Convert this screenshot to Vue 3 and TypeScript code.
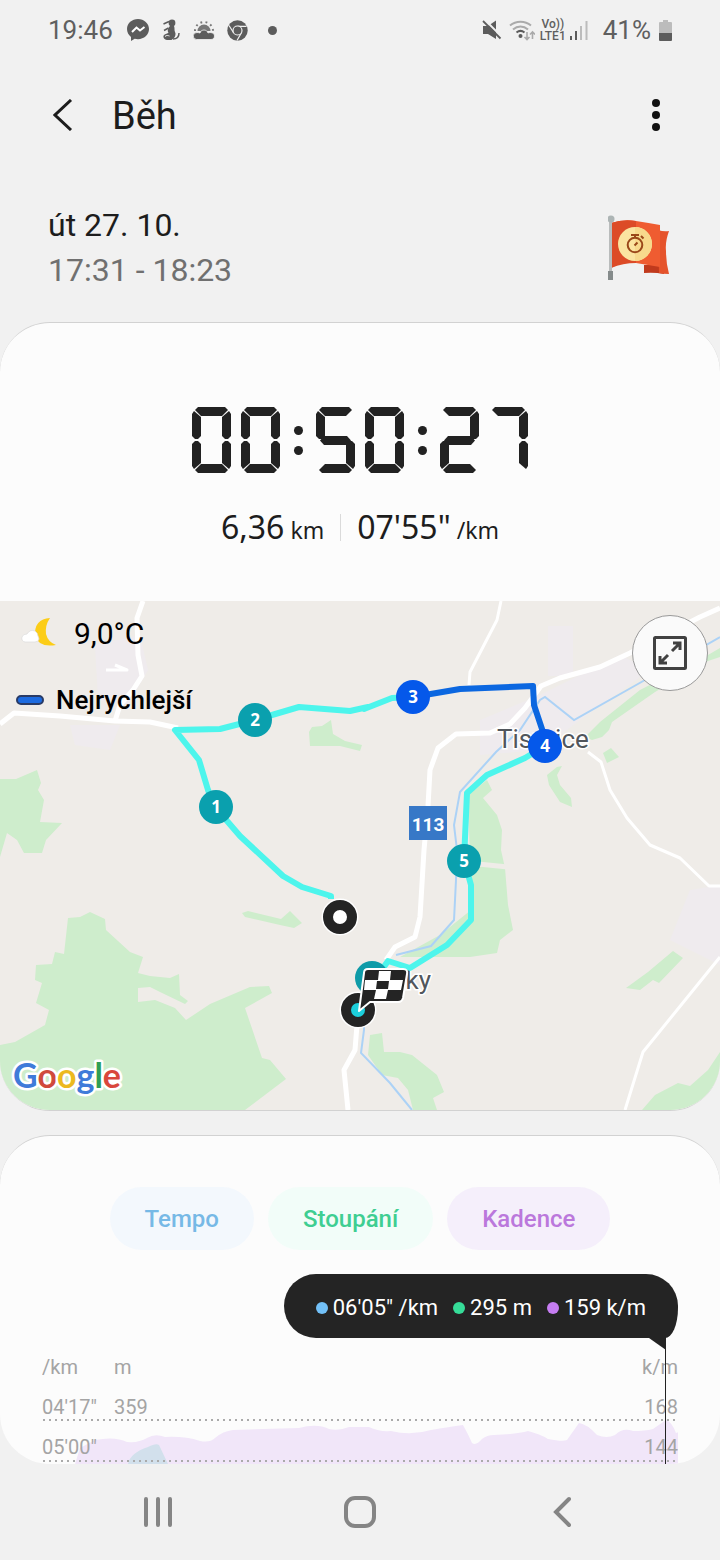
<script setup lang="ts">
interface Series {
  label: string
  tone: 'pace' | 'climb' | 'cadence'
  value: string
}

interface Marker {
  label: string
  x: number
  y: number
  fast: boolean
}

const duration = '00:50:27'

const segmentsByDigit: Record<string, string> = {
  '0': 'abcdef',
  '1': 'bc',
  '2': 'abged',
  '3': 'abgcd',
  '4': 'fgbc',
  '5': 'afgcd',
  '6': 'afgedc',
  '7': 'abc',
  '8': 'abcdefg',
  '9': 'abcdfg',
}

const series: Series[] = [
  { label: 'Tempo', tone: 'pace', value: '06\'05" /km' },
  { label: 'Stoupání', tone: 'climb', value: '295 m' },
  { label: 'Kadence', tone: 'cadence', value: '159 k/m' },
]

const markers: Marker[] = [
  { label: '1', x: 216, y: 807, fast: false },
  { label: '2', x: 255, y: 720, fast: false },
  { label: '3', x: 413, y: 697, fast: true },
  { label: '4', x: 545, y: 746, fast: true },
  { label: '5', x: 464, y: 861, fast: false },
]

const axisRows = [
  { pace: '/km', height: 'm', cadence: 'k/m' },
  { pace: '04\'17"', height: '359', cadence: '168' },
  { pace: '05\'00"', height: '', cadence: '144' },
]
</script>

<template>
  <div class="screen">
    <div class="status">
      <span class="clock">19:46</span>
      <svg class="s-msg" width="22" height="24" viewBox="0 0 22 24" aria-hidden="true">
        <path fill="#5c5c5c" d="M11 1C5 1 0 5.300 0 11c0 3.200 1.500 6 4 7.900V23l3.700-2.200c1 .3 2.100.4 3.300.4 6 0 11-4.400 11-10.100S17 1 11 1z" />
        <path fill="none" stroke="#fff" stroke-width="2" d="M5 14l4.500-4.500 3.500 3L17.500 9" />
      </svg>
      <svg class="s-fig" width="18" height="22" viewBox="0 0 18 22" aria-hidden="true">
        <circle cx="10" cy="4" r="3.400" fill="#5c5c5c" />
        <path fill="#5c5c5c" d="M8 7h4c1 2.500 0 4 1 6 1.200 2 .2 4.500-1 6l-2.500 2H5c-3-.5-4.500-3-3-5 1.500-1.500 3.500-1 4.500-2.500C5 12 6 9 8 7z" />
        <path fill="none" stroke="#5c5c5c" stroke-width="1.500" d="M7 2.500L1.500 5M6.500 9L2 11.500M11 20c3.500 0 6-2 6-6" />
        <path fill="none" stroke="#f1f1f1" d="M3 17.500c1.500-1.500 3-1 4.500-.5" />
      </svg>
      <svg class="s-sun" width="22" height="20" viewBox="0 0 22 20" aria-hidden="true">
        <path fill="none" stroke="#777" stroke-width="2" stroke-dasharray="1.800 3.400" d="M2 11a9 9 0 0118 0" />
        <path fill="#777" d="M4.500 11a6.500 6.500 0 0113 0z" />
        <path fill="#5c5c5c" stroke="#f1f1f1" stroke-width=".8" d="M3.500 19.500a3.300 3.300 0 01.5-7c1.500-.1 2 .4 3 .5 1-4 7-4 8 0 2-1 6.500-.5 6.500 3 0 2-1.500 3.500-3.500 3.500z" />
      </svg>
      <svg class="s-chrome" width="21" height="21" viewBox="0 0 21 21" aria-hidden="true">
        <circle cx="10.500" cy="10.500" r="10.200" fill="#5c5c5c" />
        <path fill="none" stroke="#f1f1f1" stroke-width="1.200" d="M19.500 6.300h-9M2 5.500l4.600 7.300M10 20.500l4.300-7.500" />
        <circle cx="10.500" cy="10.500" r="4.500" fill="#5c5c5c" stroke="#f1f1f1" stroke-width="1.200" />
      </svg>
      <span class="more-dot"></span>
      <span class="spring"></span>
      <svg class="s-mute" width="20" height="20" viewBox="0 0 20 20" aria-hidden="true">
        <path fill="#5c5c5c" d="M1 6h5l8-5.500V19L6 14H1z" />
        <path stroke="#f1f1f1" stroke-width="2" d="M3 0l17 17" />
        <path stroke="#5c5c5c" stroke-width="1.800" d="M1 1l17.500 17.500" />
      </svg>
      <svg class="s-wifi" width="26" height="21" viewBox="0 0 26 21" fill="none" stroke-width="2" aria-hidden="true">
        <path stroke="#aaa" d="M1 5.500c6-5 15-5 21 0M4 9.500c4.500-4 10.500-4 15 0" />
        <path stroke="#5c5c5c" d="M7.500 12.500c2.500-2 5.500-2 8 0" />
        <circle cx="11.500" cy="16" r="2" fill="#5c5c5c" />
        <path stroke="#aaa" stroke-width="1.600" d="M18 12v7.500M15.500 17l2.500 2.500 2.500-2.500M23.500 19v-7M21 14.500l2.500-2.500 2.500 2.500" />
      </svg>
      <span class="volte"><span>Vo))</span><span>LTE1</span></span>
      <svg class="s-signal" width="18" height="20" viewBox="0 0 18 20" aria-hidden="true">
        <path fill="#5c5c5c" d="M0 16h2v4H0zM5 11h2v9H5z" />
        <path fill="#bcbcbc" d="M10 6h2v14h-2zM15.500 1h2v19h-2z" />
      </svg>
      <span class="percent">41%</span>
      <svg class="s-batt" width="13" height="21" viewBox="0 0 13 21" aria-hidden="true">
        <path fill="#bcbcbc" d="M4 0h5v2h3q1 0 1 1v10H0V3q0-1 1-1h3z" />
        <path fill="#5c5c5c" d="M0 13h13v7q0 1-1 1H1q-1 0-1-1z" />
      </svg>
    </div>

    <header class="bar">
      <button class="icon-btn back" type="button" aria-label="Zpět">
        <svg width="20" height="32" viewBox="0 0 20 32" fill="none" stroke="#1d1d1d" stroke-width="3"><path d="M18 1L2 16l16 15" /></svg>
      </button>
      <h1>Běh</h1>
      <button class="icon-btn menu" type="button" aria-label="Další možnosti">
        <svg width="8" height="32" viewBox="0 0 8 32" fill="#111"><circle cx="4" cy="4" r="4" /><circle cx="4" cy="16" r="4" /><circle cx="4" cy="28" r="4" /></svg>
      </button>
    </header>

    <section class="when">
      <div>
        <p class="date">út 27. 10.</p>
        <p class="hours">17:31 - 18:23</p>
      </div>
      <svg width="62" height="66" viewBox="0 0 62 66" aria-hidden="true">
        <path fill="#c03a1d" d="M36 50h20v9q-10-2-20-1z" />
        <path fill="#e5532b" d="M50 15q6 2 11 1-4 11-3 20 0 12 3 23-6 0-10-1z" />
        <path fill="#ef5c31" d="M3 8q12-4 25-2t24 4v42q-12-2-24-4t-25 5z" />
        <path fill="#dc4b27" d="M3 8q12-4 25-2v42q-13 0-25 5z" />
        <path fill="#b9bcbc" d="M1 7h3v57q-2 2-3 0z" />
        <path fill="#858b8b" d="M0 56h5v9H0z" />
        <circle cx="3" cy="4" r="3.500" fill="#adb5b5" />
        <circle cx="27" cy="29" r="17" fill="#fbe4a0" />
        <path fill="#f7d98c" d="M27 12a17 17 0 010 34z" />
        <circle cx="27" cy="30" r="7.300" fill="none" stroke="#9a4719" stroke-width="2" />
        <path fill="none" stroke="#9a4719" stroke-width="2" d="M23 20h8M27 20v3M33 21l2.500 2.500M26.500 30.500l3-3" />
      </svg>
    </section>

    <section class="card">
      <div class="summary">
        <div class="timer" role="img" :aria-label="duration">
          <template v-for="(ch, i) in duration.split('')" :key="i">
            <span v-if="ch === ':'" class="colon"></span>
            <span v-else class="digit">
              <span v-for="s in segmentsByDigit[ch].split('')" :key="s" class="seg" :class="'seg-' + s"></span>
            </span>
          </template>
        </div>
        <div class="totals">
          <span class="total">6,36<small>km</small></span>
          <span class="rule"></span>
          <span class="total">07'55"<small>/km</small></span>
        </div>
      </div>

      <div class="map">
        <svg class="terrain" viewBox="0 601 720 509" role="img" aria-label="Mapa trasy">
          <rect y="601" width="720" height="509" fill="#efece8" />
          <g fill="#efebee">
            <path d="M95 645l45-10 8 35-20 35-30-5zM70 725h50l-10 25-35-5zM548 626h25v50h-25zM480 720l60-25 80-40 30 15-70 50-40 30-60 5zM690 890l30-5v80l-50-25z" />
          </g>
          <g fill="#ceedcc">
            <path d="M0 779h16l21-9 4 13-3 7 6 10-4 22 22 1-16 17-4 13H24l-7-13-10-7-7 24z" />
            <path d="M309 732l3-5 10-1 9-6 2 14 12 7 17 4-2 6-20-5-30 0z" />
            <path d="M720 648l-12 7-68 35-40 32-15 15 7 3 10-3 7-7 3-8 43-30 53-31 12-4z" />
            <path d="M603 753l8-5 8 9-12 6z" />
            <path d="M547 775l10-8 5-1-5 9 3 10 11 13 1 9-12-5-11-17z" />
            <path d="M487 780l5 10-9 8 14 17 5 15-1 20 4 18 3 37 5 25-13 10-3 13-27 4h-70l40-22 31-25-1-50-2-65z" />
            <path d="M626 988l22-16 25-21 10 7-24 25-6-3-13 10z" />
            <path d="M642 1110l13-15 23-12 12 3 18-16 12-18v58z" />
            <path d="M370 1035l12-2 2 19h16l12 3 25 20 7 17-11 6 4 12h-24l-5-20-10-12-16-3-14-20z" />
            <path d="M0 1045l15-3 30-17 4-15-13-7 6-20-7-3 1-15 16-1 3-12 9 2 4-36 12-1 10-5 15 7 1 11 24 22 13 5-5 16 12 3 20 2 9-4 1 21 8 6-3 3-25-12-10-5-12 1v14l17-2 20 8 11 12 24-16 40-17 19-1 3 7-27 15 17 50 8 2 16 19-41 31H0z" />
            <path d="M242 913l6-2 33 8 9-8 12 12-8 5-14-3-35-8z" />
          </g>
          <path fill="none" stroke="#efece8" stroke-width="5" d="M478 864l30 3" />
          <path fill="none" stroke="#acd2f6" stroke-width="2" d="M720 637l-75 43-71 40-29-23-5 3-20 30-24 22-36 40-6 33 3 25-1 30-2 40-23 26-35 9M364 1020v10l-3 23 29 30 22 27" />
          <g fill="none" stroke="#fff" stroke-linejoin="round">
            <path stroke-width="5" d="M143 601l-6 17 1 37 4 21-9 14-13 15-5 16M0 724l14-11 46 3 55 5 35 1 28 6M720 608l-20 9-70 36-30 14-40 11-19 8-16 22-15 16-20 9-34 1-18 14-8 22-2 36-4 44-4 67-5 20-20 10-9 13M357 1025l-2 25-11 20 4 40" />
            <path stroke-width="3" d="M501 601l-4 19-27 52-1 13M588 752l13 10 9 28 17 28 23 27 30 13 29 28h11M720 957l-77 95-18 58M106 670h21l-12-5" />
          </g>
          <text class="town" x="497" y="748">Tismice</text>
          <text class="town" x="431" y="989" text-anchor="end">Mrzky</text>
          <rect x="409" y="806" width="38" height="34" fill="#3778c7" />
          <text class="road" x="428" y="831" text-anchor="middle">113</text>
          <g fill="none" stroke="#4df5ec" stroke-width="6" stroke-linejoin="round">
            <path d="M331 899v-3l-29-9-19-11-43-40-25-29-7-17-9-30-24-30 45-1 35-9 44-13 51 4 18-4-4 2 28-11 18-1" />
            <path d="M545 746l-20 12-38 17-20 18-3 67 7 25v35l-24 25-37 23-22-7-14 20" />
          </g>
          <path fill="none" stroke="#0b67e0" stroke-width="6" stroke-linejoin="round" d="M413 697l47-8 73-3 1 19 10 30 1 11" />
          <g v-for="m in markers" :key="m.label">
            <circle :cx="m.x" :cy="m.y" r="17" :fill="m.fast ? '#0558ea' : '#0aa0ae'" />
            <text class="km" :x="m.x" :y="m.y + 6" text-anchor="middle">{{ m.label }}</text>
          </g>
          <circle cx="372" cy="978" r="17" fill="#0e9ba8" />
          <circle cx="340" cy="917" r="12" fill="#fff" stroke="#fff" stroke-width="13" />
          <circle cx="340" cy="917" r="12" fill="#fff" stroke="#242424" stroke-width="10" />
          <circle cx="358" cy="1010" r="12" fill="none" stroke="#fff" stroke-width="13" />
          <circle cx="358" cy="1010" r="12" fill="#1ccfdc" stroke="#242424" stroke-width="10" />
          <path fill="#242424" stroke="#fff" stroke-width="2" stroke-linejoin="round" d="M368 969h35q5 0 4 5l-4 24q-1 4-5 4h-28l-11 9 5-38q0-4 4-4z" />
          <path fill="#fff" d="M379 971h12l-1 9h13l-2 10h-13l-2 9h-12l2-9h-12l1-10h13zM377 981l-1 8h12l1-8z" fill-rule="evenodd" />
          <text class="google" x="13" y="1088"><tspan fill="#3f7bd9">G</tspan><tspan fill="#d04a3c">o</tspan><tspan fill="#ecb91e">o</tspan><tspan fill="#3f7bd9">g</tspan><tspan fill="#2f9e55">l</tspan><tspan fill="#d9473c">e</tspan></text>
        </svg>
        <div class="overlay">
          <div class="weather">
            <svg width="36" height="32" viewBox="0 0 36 32" aria-hidden="true">
              <path fill="#fccd17" d="M29 1q-16 1-15 18 4 12 21 9-8-3-10-11-1-9 4-16z" />
              <path fill="#fff" stroke="#ddd" stroke-width=".7" d="M4 25q-4-1-3-5 1-3 5-3 3-5 8-3 3 2 3 5 3 5-3 6z" />
            </svg>
            <span>9,0°C</span>
          </div>
          <div class="fastest"><i></i><span>Nejrychlejší</span></div>
        </div>
        <button class="expand" type="button" aria-label="Zvětšit mapu">
          <svg width="34" height="34" viewBox="0 0 34 34" fill="none" stroke="#414141">
            <rect x="1.500" y="1.500" width="31" height="31" rx="1" stroke-width="3" />
            <path stroke-width="3" d="M19 15l8-8M20 7h7v7M15 19l-8 8M7 20v7h7" />
          </svg>
        </button>
      </div>
    </section>

    <section class="card graph">
      <div class="chips">
        <button v-for="s in series" :key="s.tone" type="button" class="chip" :class="s.tone">{{ s.label }}</button>
      </div>
      <div class="tip">
        <span v-for="s in series" :key="s.tone" class="reading"><i :class="s.tone"></i>{{ s.value }}</span>
        <svg class="tail" width="18" height="13" viewBox="0 0 18 13" aria-hidden="true"><path fill="#242424" d="M0 0h18v13L1 1z" /></svg>
        <span class="cursor"></span>
      </div>
      <div class="chart">
        <svg class="plot" viewBox="42 1347 636 117" preserveAspectRatio="none" aria-hidden="true">
          <path fill="#f1e6f9" d="M75 1464l5-16 15-8q20-4 32 2 12 1 20-4 8-5 18-1 20-1 35 4 10 2 15-3 8-7 18-8l66-2q18-5 30 1 10 2 20-2h20q10 5 22 4 20 5 40-1 18-3 32-5 6 11 9 18 4 3 10-4 5-4 12-4 24-1 34-4 12 3 20 8 15 3 19 1l12-17q8 1 18 12 10 4 18 0 8-8 18-4 12 0 20-2l13-9q6 2 10 13l12-4v35z" />
          <path fill="#d2e0ec" d="M128 1464q2-11 20-17 8-4 11-2l9 19z" />
          <path fill="none" stroke="#aaa" stroke-width="2" stroke-dasharray="2 4" d="M43 1420h633M43 1461h633" />
        </svg>
        <div v-for="(r, i) in axisRows" :key="i" class="axis">
          <span>{{ r.pace }}</span><span>{{ r.height }}</span><span>{{ r.cadence }}</span>
        </div>
      </div>
    </section>

    <nav class="nav">
      <button class="icon-btn" type="button" aria-label="Poslední aplikace">
        <svg width="30" height="32" viewBox="0 0 30 32" stroke="#858585" stroke-width="4" stroke-linecap="round"><path d="M3 3v26M15 3v26M27 3v26" /></svg>
      </button>
      <button class="icon-btn" type="button" aria-label="Domů">
        <svg width="34" height="34" viewBox="0 0 34 34" fill="none" stroke="#858585" stroke-width="4"><rect x="3" y="3" width="28" height="28" rx="9" /></svg>
      </button>
      <button class="icon-btn" type="button" aria-label="Zpět">
        <svg width="18" height="32" viewBox="0 0 18 32" fill="none" stroke="#858585" stroke-width="4" stroke-linecap="round"><path d="M16 3L3 16l13 13" /></svg>
      </button>
    </nav>
  </div>
</template>

<style>
body {
  margin: 0;
  background: #f1f1f1;
}
</style>

<style scoped>
.screen {
  background: #f1f1f1;
  color: #1d1d1d;
  font-family: Roboto, "Liberation Sans", sans-serif;
}
.screen svg {
  display: block;
  flex: none;
}
button {
  font: inherit;
  cursor: pointer;
}
.icon-btn {
  border: 0;
  padding: 0;
  background: none;
}
.status {
  display: flex;
  align-items: center;
  height: 60px;
  padding: 0 48px 0 48px;
  color: #5f5f5f;
  font-size: 26px;
}
.s-msg { margin-left: 14px; }
.s-fig { margin-left: 13px; }
.s-sun { margin-left: 13px; }
.s-chrome { margin-left: 12px; }
.more-dot {
  width: 9px;
  height: 9px;
  margin-left: 20px;
  border-radius: 50%;
  background: #5c5c5c;
}
.spring { flex: 1; }
.s-wifi { margin-left: 7px; }
.volte {
  display: flex;
  flex-direction: column;
  align-items: center;
  margin: 0 4px 0 5px;
  font-size: 12px;
  font-weight: 500;
  line-height: 12px;
}
.percent { margin: 0 8px 0 15px; }
.bar {
  display: flex;
  align-items: center;
  height: 110px;
  padding: 0 60px 0 53px;
}
.bar h1 {
  flex: 1;
  margin: 2px 0 0 39px;
  font-size: 38px;
  font-weight: 400;
}
.when {
  display: flex;
  justify-content: space-between;
  align-items: center;
  padding: 33px 50px 29px 48px;
  font-size: 32px;
  line-height: 45px;
}
.when p { margin: 0; }
.hours { color: #707070; }
.card {
  overflow: hidden;
  border: solid #d2d2d2;
  border-width: 1px 0;
  border-radius: 50px;
  background: #fcfcfc;
}
.summary { padding: 84px 24px 54px; }
.timer {
  display: flex;
  justify-content: center;
  gap: 10px;
}
.digit {
  position: relative;
  width: 39px;
  height: 66px;
}
.seg {
  position: absolute;
  background: #222;
}
.seg-a, .seg-d, .seg-g {
  left: 3px;
  width: 33px;
  height: 9px;
}
.seg-a { top: 0; clip-path: polygon(3px 0, 30px 0, 100% 3px, 27px 100%, 6px 100%, 0 3px); }
.seg-d { bottom: 0; clip-path: polygon(6px 0, 27px 0, 100% 6px, 30px 100%, 3px 100%, 0 6px); }
.seg-g { top: 29px; clip-path: polygon(5px 0, 28px 0, 32px 50%, 28px 100%, 5px 100%, 1px 50%); }
.seg-b, .seg-c, .seg-e, .seg-f {
  width: 9px;
  height: 28px;
}
.seg-b, .seg-f { top: 4px; }
.seg-c, .seg-e { bottom: 4px; }
.seg-e, .seg-f { left: 0; }
.seg-b, .seg-c { right: 0; }
.seg-f { clip-path: polygon(2px 0, 100% 6px, 100% 25px, 6px 100%, 3px 100%, 0 25px, 0 3px); }
.seg-b { clip-path: polygon(7px 0, 100% 3px, 100% 25px, 6px 100%, 3px 100%, 0 25px, 0 6px); }
.seg-e { clip-path: polygon(3px 0, 6px 0, 100% 3px, 100% 22px, 2px 100%, 0 25px, 0 3px); }
.seg-c { clip-path: polygon(3px 0, 6px 0, 100% 3px, 100% 25px, 7px 100%, 0 22px, 0 3px); }
.colon {
  display: flex;
  flex-direction: column;
  justify-content: center;
  gap: 11px;
  width: 16px;
}
.colon::before, .colon::after {
  content: "";
  width: 9px;
  height: 9px;
  margin: 0 auto;
  border-radius: 50%;
  background: #222;
}
.totals {
  display: flex;
  justify-content: center;
  align-items: center;
  margin-top: 34px;
  font-family: "Noto Sans", "Open Sans", sans-serif;
  font-size: 32px;
  line-height: 40px;
}
.total {
  display: flex;
  align-items: baseline;
  gap: 6px;
  height: 40px;
}
.totals small { font-size: 23px; }
.rule {
  width: 1px;
  height: 27px;
  margin: 0 16px;
  background: #dadada;
}
.map { position: relative; }
.terrain { width: 100%; height: auto; }
.town {
  fill: #51565c;
  stroke: #fff;
  stroke-width: 3px;
  paint-order: stroke;
  font-size: 26px;
}
.road {
  fill: #fff;
  font-size: 19px;
  font-weight: 700;
}
.km {
  fill: #fff;
  font-family: "Noto Sans", sans-serif;
  font-size: 17px;
  font-weight: 700;
}
.google {
  stroke: #fff;
  stroke-width: 5px;
  stroke-linejoin: round;
  paint-order: stroke;
  font-family: Lato, sans-serif;
  font-size: 34px;
  font-weight: 700;
}
.overlay {
  position: absolute;
  top: 12px;
  left: 16px;
  color: #000;
}
.weather {
  display: flex;
  align-items: center;
  gap: 17px;
  height: 40px;
  padding-left: 5px;
  font-size: 30px;
}
.fastest {
  display: flex;
  align-items: center;
  gap: 12px;
  margin-top: 27px;
  height: 40px;
  font-size: 26px;
  font-weight: 500;
}
.fastest i {
  box-sizing: border-box;
  width: 28px;
  height: 10px;
  border: 2px solid #293b66;
  border-radius: 5px;
  background: #1d6be0;
}
.expand {
  display: grid;
  place-items: center;
  position: absolute;
  top: 14px;
  right: 12px;
  width: 76px;
  height: 76px;
  border: 1px solid #999;
  border-radius: 50%;
  background: #fafafa;
}
.graph {
  margin-top: 24px;
  border-bottom: 0;
}
.chips {
  display: flex;
  justify-content: center;
  gap: 14px;
  padding: 51px 24px 24px;
}
.chip {
  height: 63px;
  padding: 0 35px;
  border: 0;
  border-radius: 32px;
  font-size: 24px;
  font-weight: 500;
}
.chip.pace { background: #f3f8fd; color: #76b9e6; }
.chip.climb { background: #f2fdf9; color: #3fce92; }
.chip.cadence { background: #f5effb; color: #bb78dc; }
.tip {
  display: flex;
  align-items: center;
  gap: 15px;
  position: relative;
  width: fit-content;
  height: 64px;
  box-sizing: border-box;
  margin: 0 42px 0 auto;
  padding: 3px 32px 0;
  border-radius: 32px 32px 13px 32px / 32px 32px 30px 32px;
  background: #242424;
  color: #fff;
  font-size: 22px;
}
.reading {
  display: flex;
  align-items: center;
  gap: 5px;
}
.reading i {
  width: 12px;
  height: 12px;
  border-radius: 50%;
}
.reading .pace { background: #72c0f7; }
.reading .climb { background: #36dc98; }
.reading .cadence { background: #c67df2; }
.tail {
  position: absolute;
  top: 63px;
  right: 12px;
}
.cursor {
  position: absolute;
  z-index: 1;
  top: 63px;
  right: 12px;
  width: 1px;
  height: 127px;
  background: #222;
}
.chart {
  position: relative;
  height: 117px;
  margin: 9px 42px 0;
  overflow: hidden;
}
.plot {
  position: absolute;
  inset: 0;
  width: 100%;
  height: 100%;
}
.axis {
  display: grid;
  grid-template-columns: 72px 1fr auto;
  position: relative;
  color: #a4a4a4;
  font-size: 20px;
  line-height: 40px;
}
.nav {
  display: flex;
  justify-content: space-between;
  align-items: center;
  height: 96px;
  padding: 0 134px;
}
.nav .icon-btn {
  display: grid;
  place-items: center;
  width: 48px;
  height: 48px;
}
</style>
